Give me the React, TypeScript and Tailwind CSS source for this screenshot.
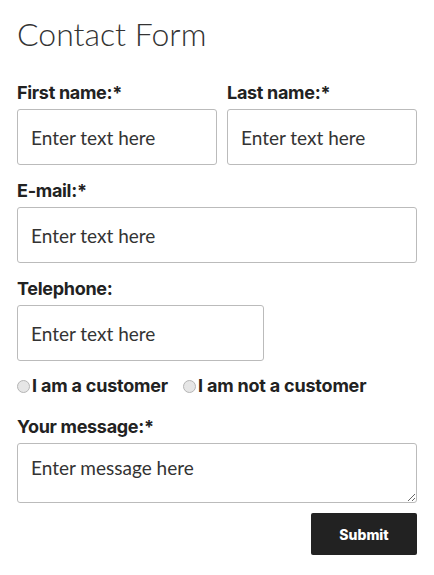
import React from "react";

const font = { fontFamily: "Lato, 'Open Sans', sans-serif" };
const labelFont = { fontFamily: "Inter, Lato, sans-serif" };

function Field({ label, width, placeholder = "Enter text here" }: { label: string; width: string; placeholder?: string }) {
  return (
    <div className={`flex flex-col ${width}`}>
      <label className="mb-[3px] text-[18px] font-bold leading-[26px] tracking-[-0.3px] text-[#222]" style={labelFont}>
        {label}
      </label>
      <input
        type="text"
        placeholder={placeholder}
        className="h-[56px] w-full rounded-[3px] border border-[#bbb] bg-white px-[13px] text-[19px] text-[#333] outline-none placeholder:text-[#333]"
      />
    </div>
  );
}

function Radio({ label }: { label: string }) {
  return (
    <label className="flex items-center gap-[2px]">
      <span className="h-[13px] w-[13px] rounded-full border border-[#b5b5b5] bg-[#e6e6e6]" />
      <span className="text-[18px] font-bold tracking-[-0.2px] text-[#222]" style={labelFont}>
        {label}
      </span>
    </label>
  );
}

export default function App() {
  return (
    <main className="min-h-[575px] bg-white px-[17px] pt-[13px]" style={font}>
      <h1 className="text-[32px] font-light leading-[42px] text-[#333]">Contact Form</h1>

      <form className="mt-[25px] flex flex-col" onSubmit={(e) => e.preventDefault()}>
        <div className="flex gap-[10px]">
          <Field label="First name:*" width="w-[200px]" />
          <Field label="Last name:*" width="w-[190px]" />
        </div>

        <div className="mt-[13px]">
          <Field label="E-mail:*" width="w-[400px]" />
        </div>

        <div className="mt-[13px]">
          <Field label="Telephone:" width="w-[247px]" />
        </div>

        <div className="mt-[12px] flex items-center gap-[15px] leading-[26px]">
          <Radio label="I am a customer" />
          <Radio label="I am not a customer" />
        </div>

        <div className="mt-[15px] flex flex-col">
          <label className="mb-[3px] text-[18px] font-bold leading-[26px] tracking-[-0.3px] text-[#222]" style={labelFont}>
            Your message:*
          </label>
          <textarea
            placeholder="Enter message here"
            className="h-[60px] w-full rounded-[3px] border border-[#bbb] bg-white px-[13px] py-[11px] text-[19px] leading-[26px] text-[#333] outline-none placeholder:text-[#333]"
          />
        </div>

        <div className="mt-[10px] flex justify-end">
          <button
            type="submit"
            className="h-[42px] w-[106px] rounded-[2px] bg-[#222] text-[14px] font-extrabold text-white"
            style={labelFont}
          >
            Submit
          </button>
        </div>
      </form>
    </main>
  );
}
